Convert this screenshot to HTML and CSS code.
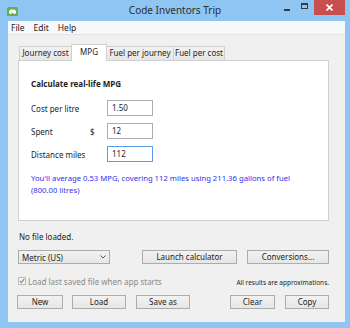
FILE: index.html
```html
<!DOCTYPE html>
<html lang="en">
<head>
    <meta charset="UTF-8">
    <title>Code Inventors Trip</title>
    <link rel="stylesheet" href="styles.css">
</head>
<body>

    <div class="window">
        <div class="titlebar">
            <div class="tb-left">
                <svg class="app-icon" width="11" height="9" viewBox="0 0 11 9">
                    <rect width="11" height="9" rx="1.5" fill="#5fb246"/>
                    <path d="M2 6 L2 4 L3.5 2.5 L7.5 2.5 L9 4 L9 6 Z" fill="#fff"/>
                    <circle cx="3.5" cy="6.3" r="1" fill="#fff"/>
                    <circle cx="7.5" cy="6.3" r="1" fill="#fff"/>
                </svg>
            </div>
            <div class="title">Code Inventors Trip</div>
            <div class="controls">
                <span class="ctl min"><i></i></span>
                <span class="ctl max"><i></i></span>
                <span class="ctl close">
                    <svg width="7" height="7" viewBox="0 0 7 7"><path d="M0.5 0.5 L6.5 6.5 M6.5 0.5 L0.5 6.5" stroke="#fff" stroke-width="1.6"/></svg>
                </span>
            </div>
        </div>

        <div class="client">
            <div class="menubar">
                <span>File</span>
                <span>Edit</span>
                <span>Help</span>
            </div>

            <div class="content">
                <div class="tabs">
                    <div class="tab w-journey">Journey cost</div>
                    <div class="tab active w-mpg">MPG</div>
                    <div class="tab w-fpj">Fuel per journey</div>
                    <div class="tab w-fpc">Fuel per cost</div>
                </div>

                <div class="panel">
                    <h2>Calculate real-life MPG</h2>
                    <div class="field">
                        <label>Cost per litre</label>
                        <span class="unit"></span>
                        <div class="input">1.50</div>
                    </div>
                    <div class="field">
                        <label>Spent</label>
                        <span class="unit">$</span>
                        <div class="input">12</div>
                    </div>
                    <div class="field">
                        <label>Distance miles</label>
                        <span class="unit"></span>
                        <div class="input focused">112</div>
                    </div>
                    <p class="result">You'll average 0.53 MPG, covering 112 miles using 211.36 gallons of fuel<br>(800.00 litres)</p>
                </div>

                <div class="status">No file loaded.</div>

                <div class="row">
                    <div class="select">
                        <span>Metric (US)</span>
                        <svg width="6" height="4" viewBox="0 0 6 4"><path d="M0.5 0.5 L3 3 L5.5 0.5" fill="none" stroke="#555" stroke-width="1"/></svg>
                    </div>
                    <button class="btn w-launch">Launch calculator</button>
                    <button class="btn w-conv">Conversions...</button>
                </div>

                <div class="row opts">
                    <div class="check">
                        <span class="box">
                            <svg width="6" height="6" viewBox="0 0 6 6"><path d="M0.8 3 L2.4 4.6 L5.3 1" fill="none" stroke="#8a8a8a" stroke-width="1.2"/></svg>
                        </span>
                        <span>Load last saved file when app starts</span>
                    </div>
                    <div class="note">All results are approximations.</div>
                </div>

                <div class="row actions">
                    <button class="btn w-new">New</button>
                    <button class="btn w-load">Load</button>
                    <button class="btn w-save">Save as</button>
                    <div class="spacer"></div>
                    <button class="btn w-clear">Clear</button>
                    <button class="btn w-copy">Copy</button>
                </div>
            </div>
        </div>
    </div>

</body>
</html>
```

FILE: styles.css
```css
body {
    margin: 0;
    padding: 0;
    font-family: "Noto Sans", "Open Sans", sans-serif;
    font-size: 8px;
    color: #1e1e1e;
    background-color: #8ec5f2;
}
.window {
    width: 350px;
    height: 328px;
    display: flex;
    flex-direction: column;
    background-color: #8ec5f2;
}
.titlebar {
    height: 21px;
    display: grid;
    grid-template-columns: 1fr auto 1fr;
    align-items: start;
}
.tb-left {
    padding: 7px 0 0 7px;
}
.app-icon {
    display: block;
}
.title {
    font-size: 10px;
    line-height: 21px;
    color: #2e2e2e;
}
.controls {
    display: flex;
    justify-content: flex-end;
    padding-right: 5px;
}
.ctl {
    height: 15px;
    display: flex;
    align-items: center;
    justify-content: center;
}
.min {
    width: 17px;
}
.min i {
    display: block;
    width: 6px;
    height: 2px;
    margin-top: 4px;
    background: #3a3a3a;
}
.max {
    width: 19px;
}
.max i {
    display: block;
    width: 5px;
    height: 3px;
    margin-top: -3px;
    border: 1px solid #3a3a3a;
    border-top-width: 2px;
}
.close {
    width: 31px;
    background-color: #c7504f;
}
.close svg {
    display: block;
}

.client {
    margin-left: 8px;
    width: 337px;
    height: 301px;
    background-color: #f0f0f0;
}
.menubar {
    height: 13px;
    display: flex;
    gap: 9px;
    padding-left: 3px;
    line-height: 13px;
    font-size: 8.5px;
    background-color: #f7f8f9;
    border-bottom: 1px solid #e4e6e8;
}
.content {
    padding: 9px 16px 0 10px;
}
.tabs {
    display: flex;
    align-items: flex-end;
    height: 16px;
    padding-left: 2px;
    position: relative;
    z-index: 1;
}
.tab {
    box-sizing: border-box;
    height: 14px;
    line-height: 12px;
    text-align: center;
    border: 1px solid #d0d0d0;
    border-bottom: none;
    margin-left: -1px;
    background: linear-gradient(#f2f2f2, #e6e6e6);
}
.tab.active {
    height: 17px;
    margin-bottom: -1px;
    line-height: 13px;
    background: #fff;
    border-color: #d0d0d0;
}
.w-journey { width: 53px; }
.w-mpg { width: 36px; }
.w-fpj { width: 68px; }
.w-fpc { width: 52px; }

.panel {
    box-sizing: border-box;
    height: 161px;
    padding: 17px 0 0 12px;
    background: #fff;
    border: 1px solid #d0d0d0;
}
.panel h2 {
    margin: 0;
    font-size: 8px;
    font-weight: bold;
    line-height: 12px;
}
.field {
    display: flex;
    align-items: center;
    height: 16px;
    margin-top: 7px;
}
.panel h2 + .field {
    margin-top: 10px;
}
.field label {
    width: 59px;
}
.unit {
    width: 17px;
}
.input {
    box-sizing: border-box;
    width: 46px;
    height: 16px;
    line-height: 14px;
    padding-left: 4px;
    border: 1px solid #acadb3;
    background: #fff;
}
.input.focused {
    border-color: #5a9de2;
}
.result {
    margin: 10px 0 0;
    font-size: 7.7px;
    line-height: 12px;
    color: #3131ee;
}

.status {
    margin-top: 10px;
    line-height: 12px;
    padding-left: 1px;
}
.row {
    display: flex;
    align-items: center;
    margin-top: 7px;
    height: 14px;
}
.select {
    box-sizing: border-box;
    width: 92px;
    height: 14px;
    display: flex;
    align-items: center;
    justify-content: space-between;
    padding: 0 3px 0 3px;
    border: 1px solid #acacac;
    background: linear-gradient(#f2f2f2, #e6e6e6);
}
.select svg {
    display: block;
}
.btn {
    box-sizing: border-box;
    height: 14px;
    padding: 0;
    font-family: inherit;
    font-size: 8px;
    line-height: 12px;
    color: #1e1e1e;
    border: 1px solid #acacac;
    background: linear-gradient(#f2f2f2, #e6e6e6);
}
.w-launch { width: 95px; margin-left: 32px; }
.w-conv { width: 82px; margin-left: 10px; }

.opts {
    margin-top: 12px;
    height: 10px;
    justify-content: space-between;
}
.check {
    display: flex;
    align-items: center;
    gap: 2px;
    color: #8a8a8a;
}
.box {
    box-sizing: border-box;
    width: 8px;
    height: 8px;
    display: flex;
    align-items: center;
    justify-content: center;
    border: 1px solid #bcbcbc;
    background: #f4f4f4;
}
.note {
    font-size: 6.5px;
    padding-top: 3px;
}
.actions {
    margin-top: 9px;
}
.spacer {
    flex: 1;
}
.w-new { width: 46px; margin-left: -1px; }
.w-load { width: 54px; margin-left: 9px; }
.w-save { width: 54px; margin-left: 10px; }
.w-clear { width: 45px; }
.w-copy { width: 44px; margin-left: 10px; }
```
